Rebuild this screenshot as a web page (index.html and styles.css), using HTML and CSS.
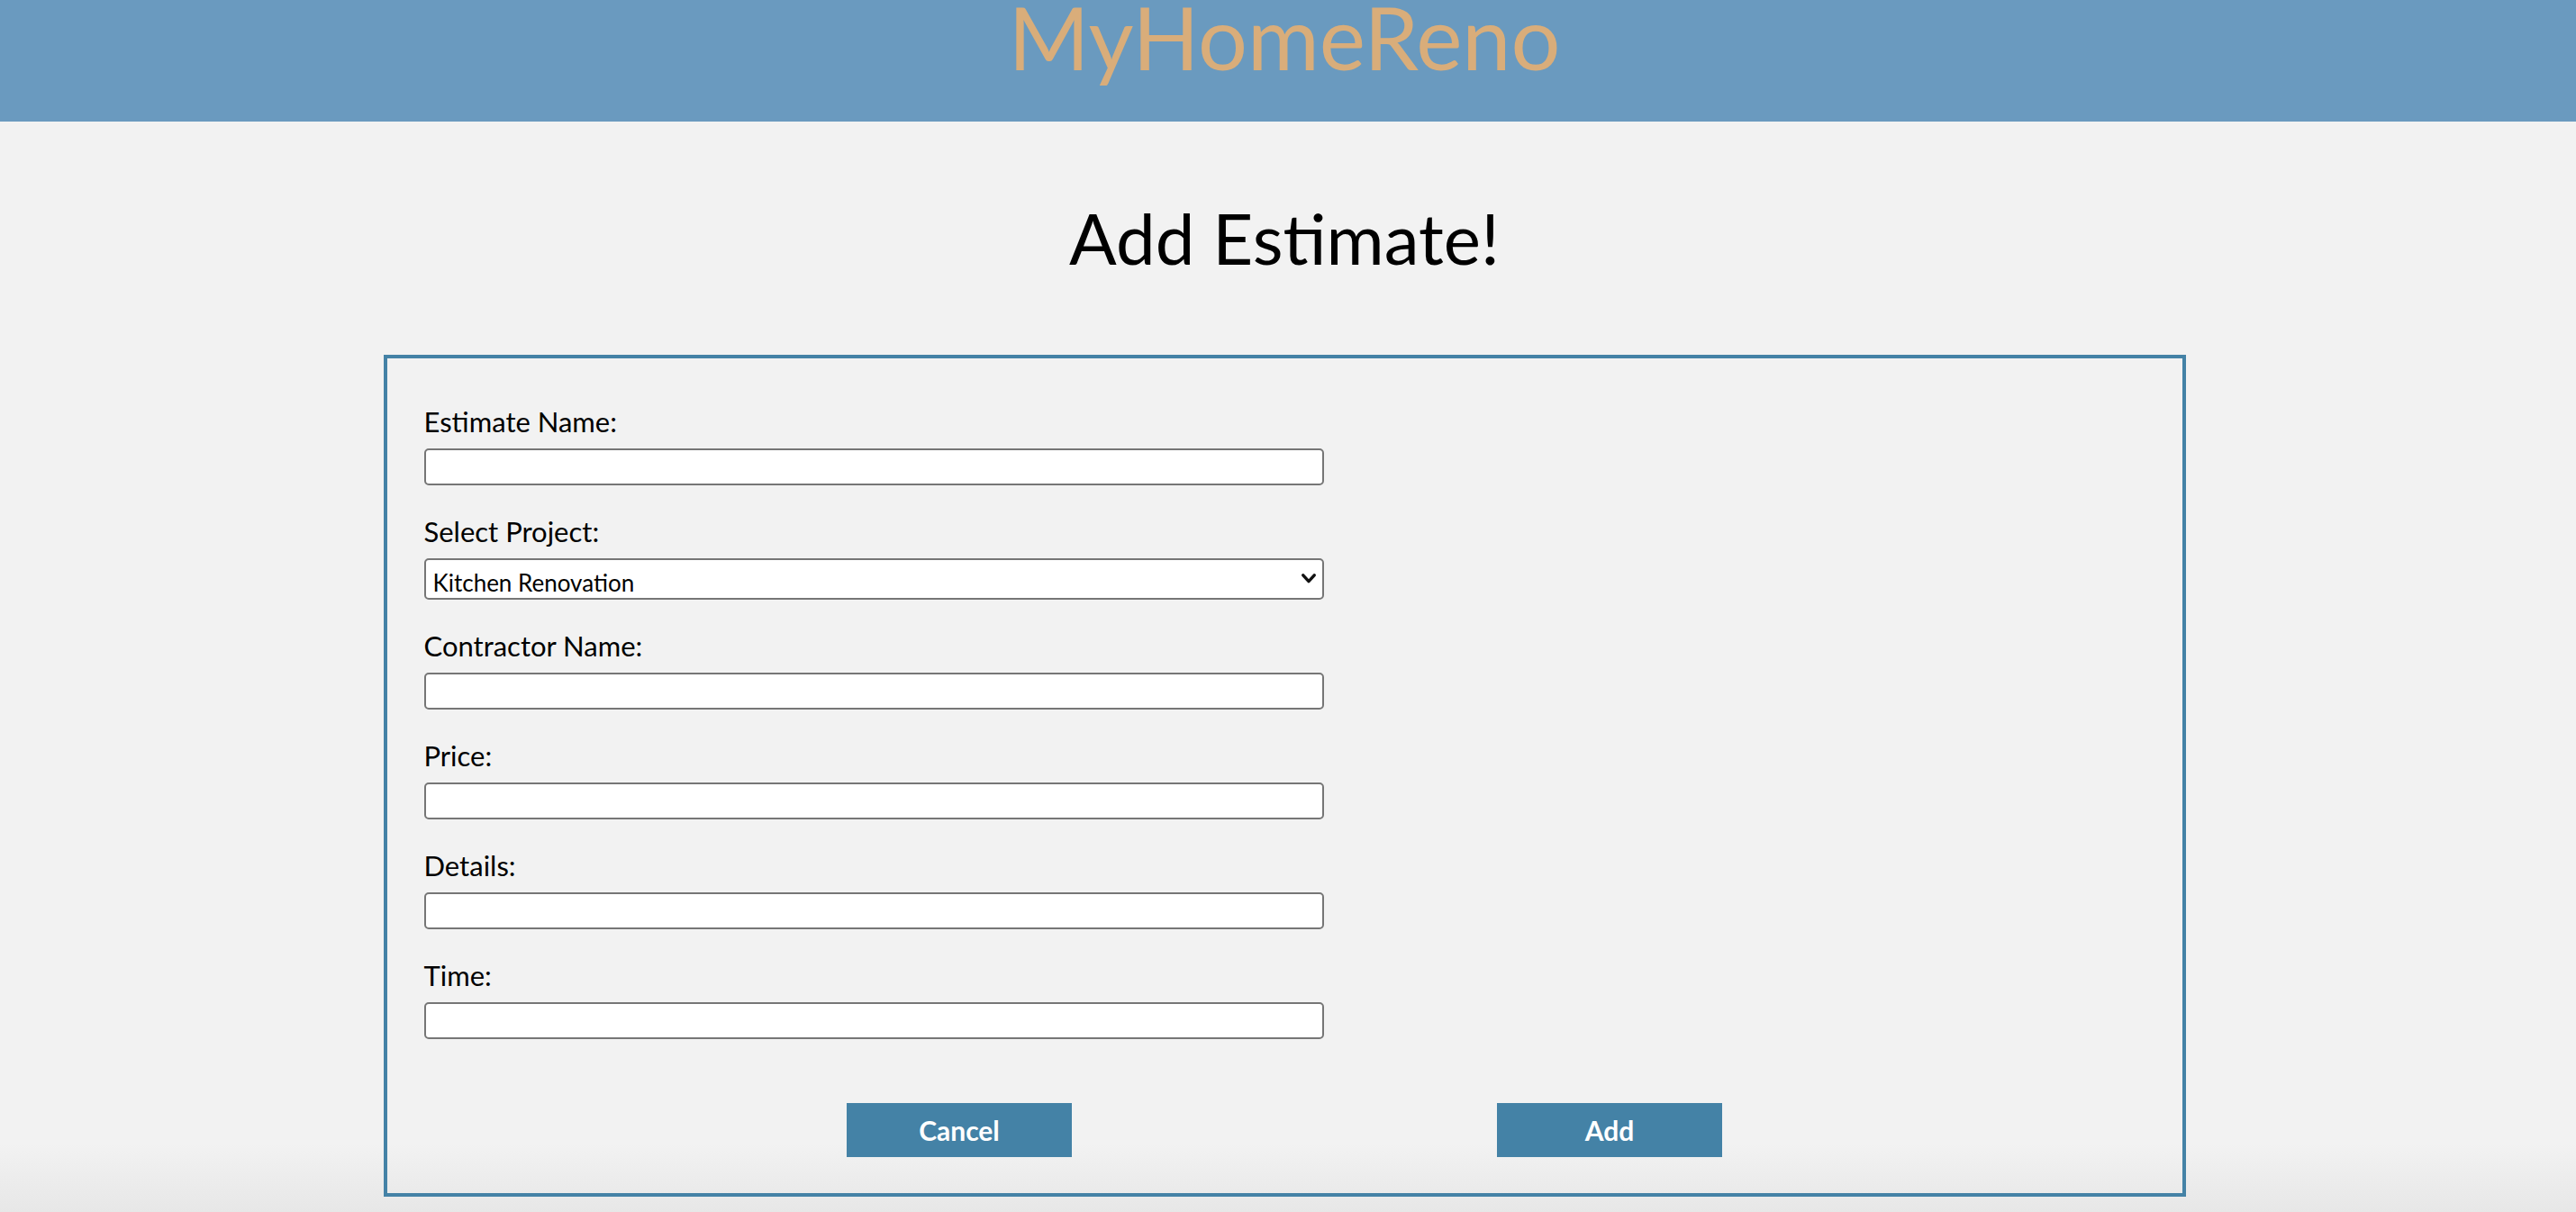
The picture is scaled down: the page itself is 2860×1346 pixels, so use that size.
FILE: index.html
```html
<!DOCTYPE html>
<html lang="en">
<head>
<meta charset="utf-8">
<title>MyHomeReno - Add Estimate</title>
<link rel="stylesheet" href="styles.css">
</head>
<body>
<header class="site-header">
  <div class="brand">MyHomeReno</div>
</header>
<main class="page">
  <h1 class="page-title">Add Estimate!</h1>
  <form class="estimate-form">
    <div class="field">
      <label class="field-label" for="name">Estimate Name:</label>
      <input class="field-input" id="name" type="text">
    </div>
    <div class="field">
      <label class="field-label" for="project">Select Project:</label>
      <div class="select-wrap">
        <select class="field-select" id="project">
          <option>Kitchen Renovation</option>
        </select>
        <svg class="chevron" width="16" height="11" viewBox="0 0 16 11"><path d="M1.8 1.8 L8 8.6 L14.2 1.8" fill="none" stroke="#111" stroke-width="3.4" stroke-linecap="round" stroke-linejoin="round"/></svg>
      </div>
    </div>
    <div class="field">
      <label class="field-label" for="contractor">Contractor Name:</label>
      <input class="field-input" id="contractor" type="text">
    </div>
    <div class="field">
      <label class="field-label" for="price">Price:</label>
      <input class="field-input" id="price" type="text">
    </div>
    <div class="field">
      <label class="field-label" for="details">Details:</label>
      <input class="field-input" id="details" type="text">
    </div>
    <div class="field">
      <label class="field-label" for="time">Time:</label>
      <input class="field-input" id="time" type="text">
    </div>
    <div class="actions">
      <button class="btn" type="button">Cancel</button>
      <button class="btn" type="button">Add</button>
    </div>
  </form>
</main>
</body>
</html>
```
FILE: styles.css
```css
html {
  background: #f2f2f2;
}
body {
  margin: 0;
  min-height: 1346px;
  font-family: Lato, "Liberation Sans", sans-serif;
  color: #000;
  background: linear-gradient(to bottom, #f2f2f2 0, #f2f2f2 1270px, #e7e7e7 1346px);
}
.site-header {
  height: 135px;
  background: #6a9abf;
  padding-right: 8px;
  display: flex;
  justify-content: center;
  align-items: flex-start;
}
.brand {
  font-size: 97px;
  line-height: 80px;
  padding-top: 1px;
  color: #d9ad7a;
}
.page {
  padding-right: 8px;
  display: flex;
  flex-direction: column;
  align-items: center;
}
.page-title {
  margin: 90px 0 91px;
  font-size: 78px;
  line-height: 78px;
  font-weight: 400;
}
.estimate-form {
  box-sizing: border-box;
  width: 2001px;
  border: 4px solid #4482a6;
  padding: 52px 41px 40px;
  display: flex;
  flex-direction: column;
}
.field {
  display: flex;
  flex-direction: column;
  align-items: flex-start;
  margin-bottom: 33px;
}
.field-label {
  font-size: 31px;
  line-height: 36px;
  margin-bottom: 12px;
}
.field-input {
  box-sizing: border-box;
  width: 999px;
  height: 41px;
  margin: 0;
  border: 2px solid #767676;
  border-radius: 5px;
  background: #fff;
  font-family: inherit;
  font-size: 26px;
  padding: 0 8px;
}
.select-wrap {
  position: relative;
  width: 999px;
}
.field-select {
  -webkit-appearance: none;
  appearance: none;
  box-sizing: border-box;
  width: 999px;
  height: 46px;
  margin: 0;
  border: 2px solid #767676;
  border-radius: 5px;
  background: #fff;
  color: #000;
  font-family: inherit;
  font-size: 26px;
  padding: 8px 8px 0;
}
.chevron {
  position: absolute;
  right: 9px;
  top: 17px;
  pointer-events: none;
}
.actions {
  margin-top: 38px;
  display: flex;
  justify-content: center;
  gap: 472px;
}
.btn {
  width: 250px;
  height: 60px;
  border: none;
  background: #4482a6;
  color: #fff;
  font-family: inherit;
  font-size: 30px;
  font-weight: 700;
  padding: 0;
}
```
